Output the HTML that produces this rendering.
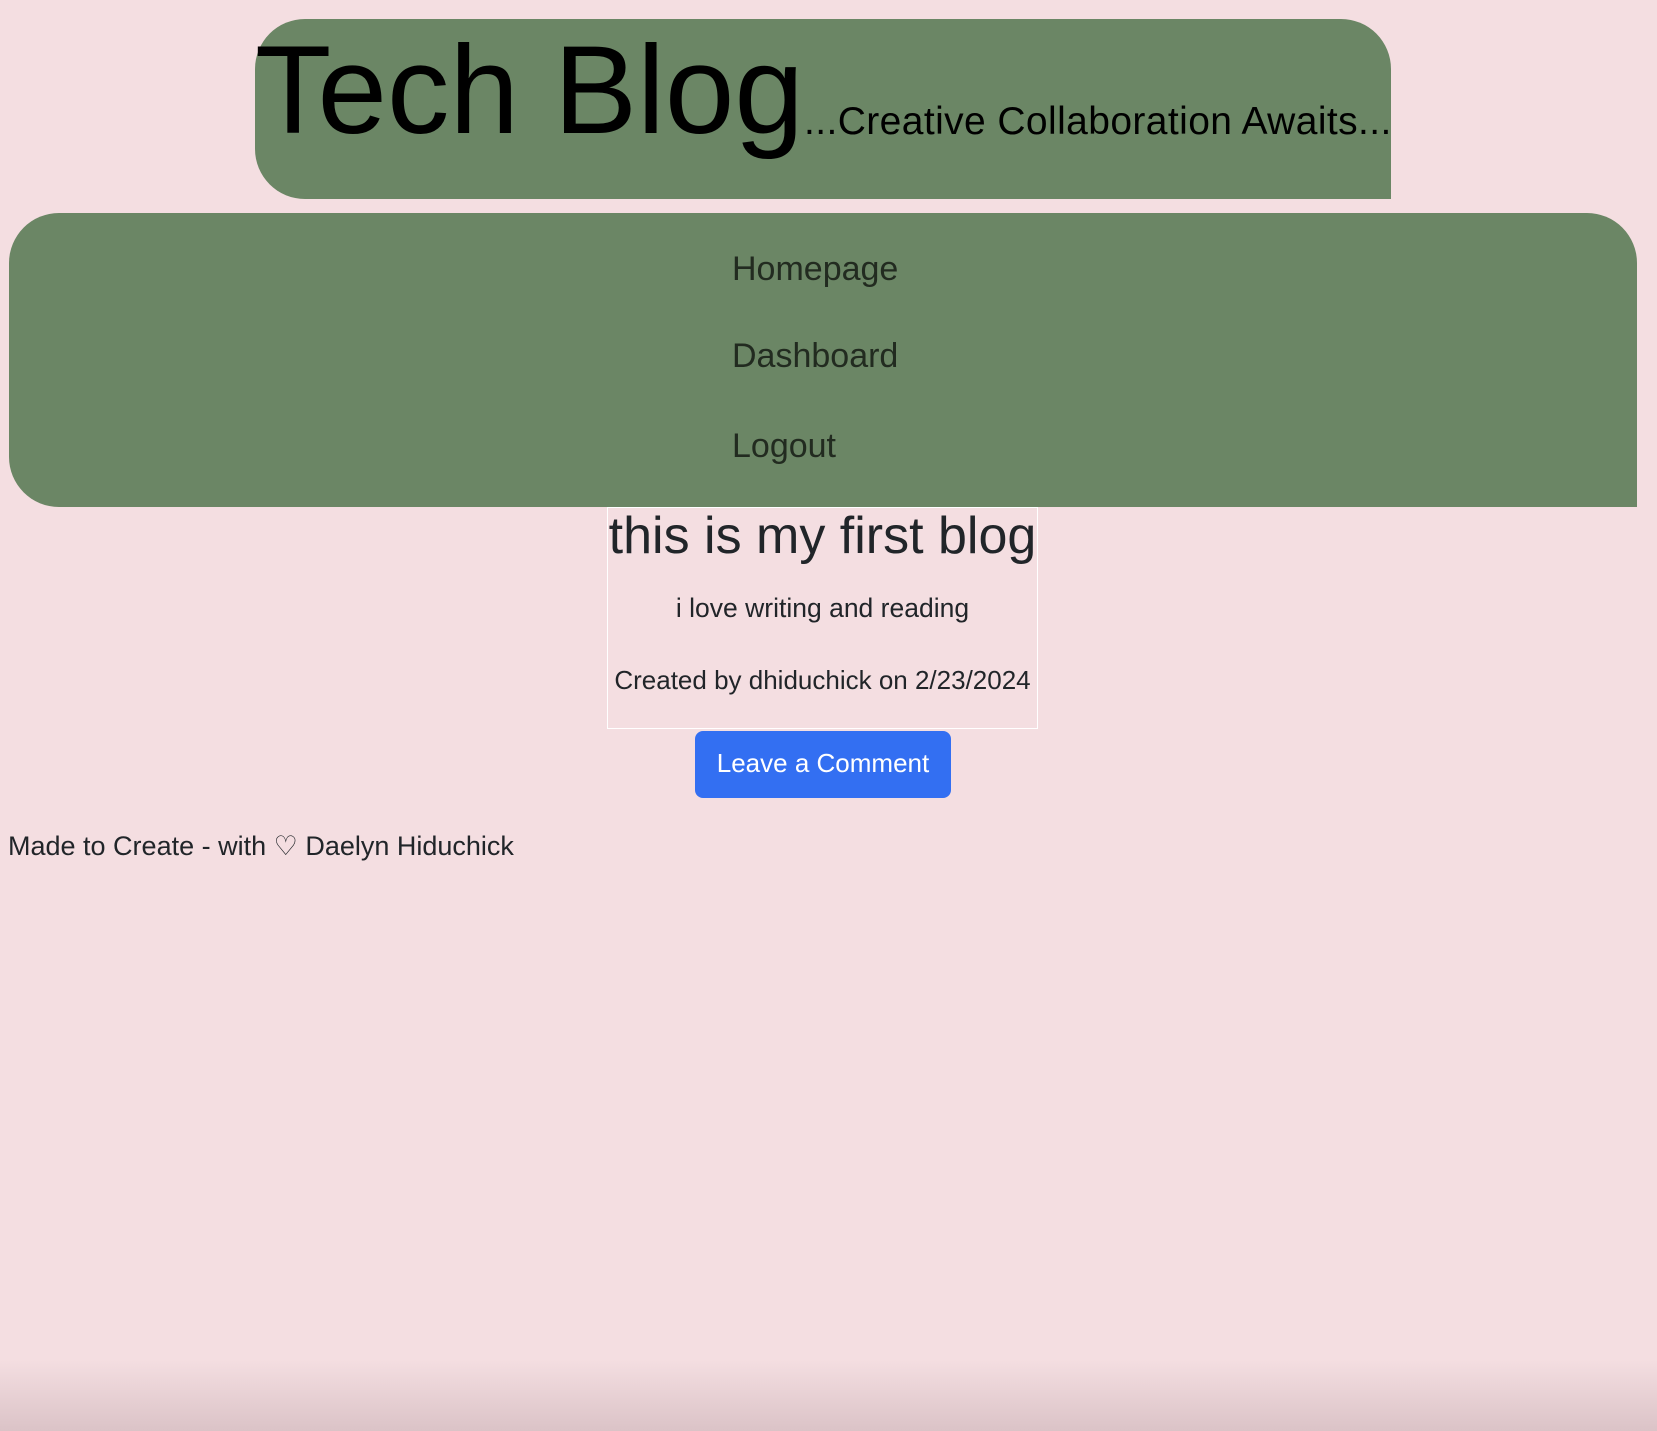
<!DOCTYPE html>
<html><head><style>
html,body{margin:0;padding:0;width:1657px;height:1431px;overflow:hidden;background:#f4dee1;font-family:"Liberation Sans",sans-serif;color:#212529;position:relative}
.a{position:absolute;white-space:nowrap;line-height:1}
#hdr{position:absolute;left:255px;top:19px;width:1136px;height:180px;background:#6b8665;border-radius:50px 50px 0 50px}
#nav{position:absolute;left:9px;top:213px;width:1628px;height:294px;background:#6b8665;border-radius:50px 50px 0 50px}
#card{position:absolute;left:607px;top:507px;width:431px;height:222px;border:1px solid #fff;box-sizing:border-box}
#btn{position:absolute;left:695px;top:731px;width:256px;height:67px;background:#336ff2;border-radius:8px;color:#fff;font-size:26px;text-align:center;line-height:64px}
#shade{position:absolute;left:0;top:1360px;width:1657px;height:71px;background:linear-gradient(#f4dee100,#dbc3c7)}
</style></head><body>
<div id="hdr"></div>
<div class="a" style="left:255px;top:28px;font-size:125px;color:#000">Tech Blog</div>
<div class="a" style="left:804px;top:102px;font-size:39px;color:#000;letter-spacing:0.4px">...Creative Collaboration Awaits...</div>
<div id="nav"></div>
<div class="a" style="left:732px;top:252px;font-size:34px;color:#222b20">Homepage</div>
<div class="a" style="left:732px;top:339px;font-size:34px;color:#222b20">Dashboard</div>
<div class="a" style="left:732px;top:429px;font-size:34px;color:#222b20">Logout</div>
<div id="card"></div>
<div class="a" style="left:607px;width:431px;text-align:center;top:510px;font-size:52px">this is my first blog</div>
<div class="a" style="left:607px;width:431px;text-align:center;top:595px;font-size:26.5px">i love writing and reading</div>
<div class="a" style="left:607px;width:431px;text-align:center;top:667px;font-size:26px">Created by dhiduchick on 2/23/2024</div>
<div id="btn">Leave a Comment</div>
<div class="a" style="left:8px;top:833px;font-size:27px">Made to Create - with ♡ Daelyn Hiduchick</div>
<div id="shade"></div>
</body></html>
